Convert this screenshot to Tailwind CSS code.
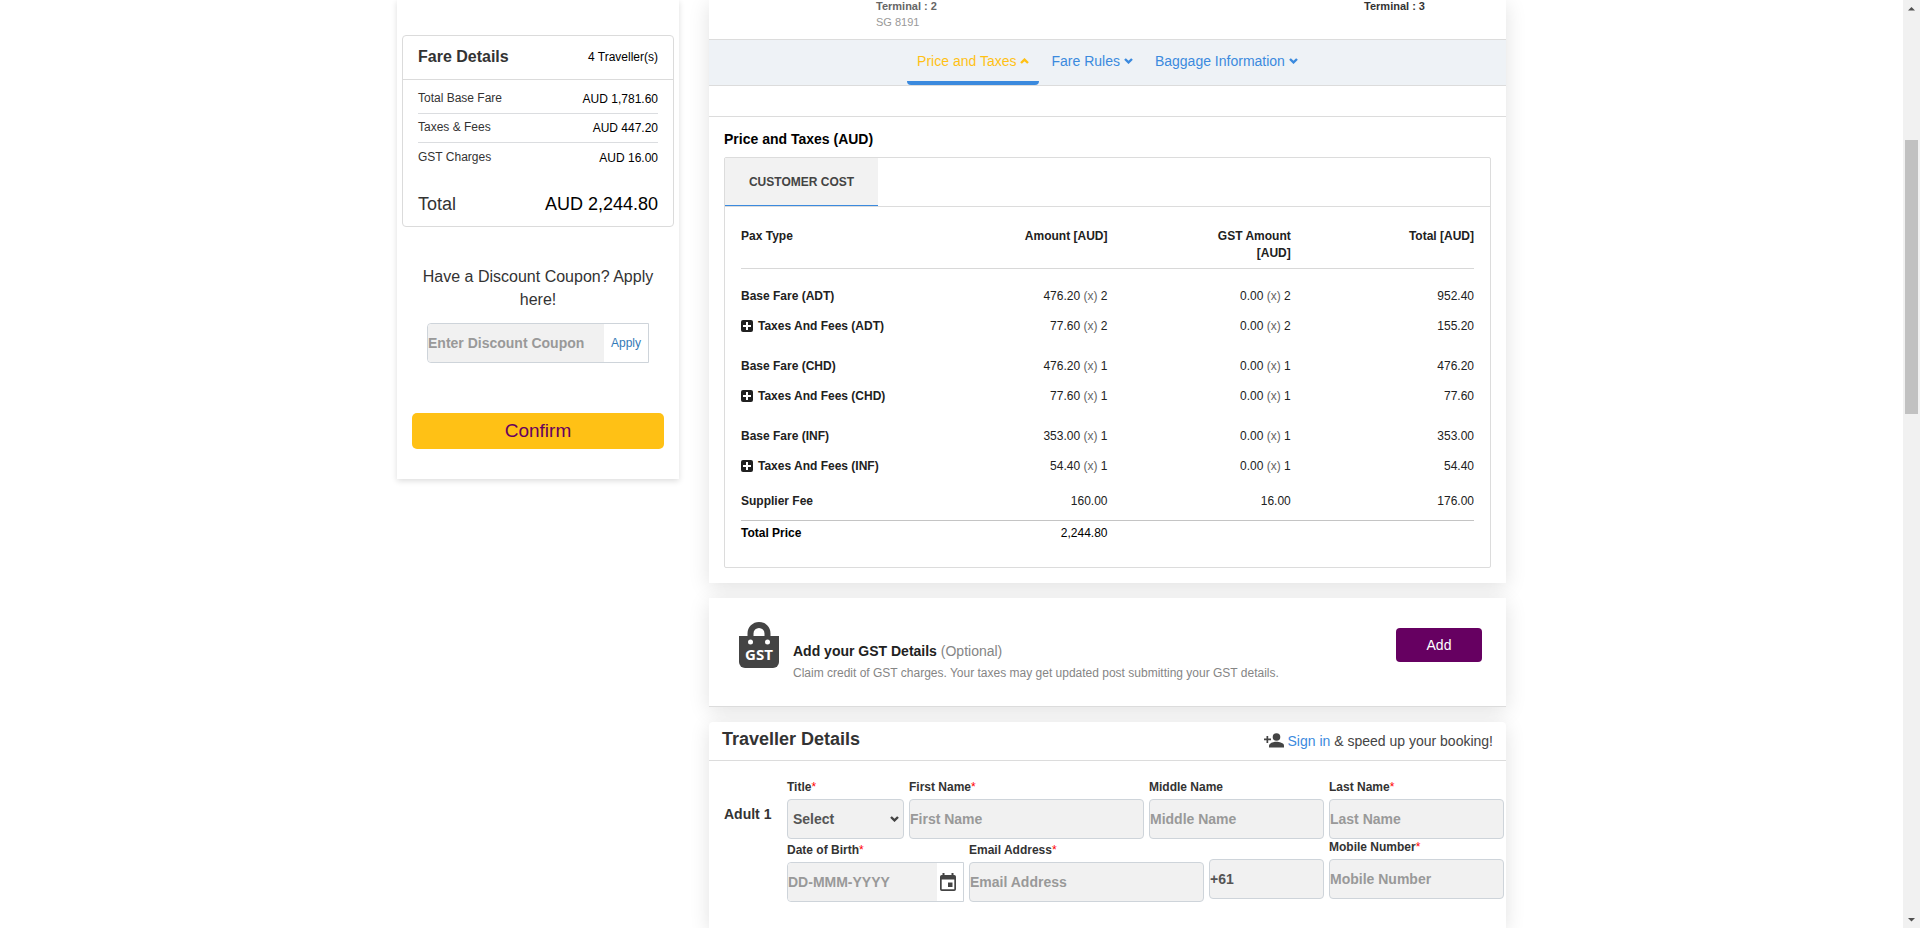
<!DOCTYPE html>
<html lang="en">
<head>
<meta charset="utf-8">
<meta name="viewport" content="width=device-width, initial-scale=1">
<title>Review and Traveller Details</title>
<script src="https://cdn.jsdelivr.net/npm/@tailwindcss/browser@4"></script>
</head>
<body class="flex h-screen overflow-hidden bg-white font-['Liberation_Sans',Arial,sans-serif] text-xs text-[#212121]">

<svg class="hidden" aria-hidden="true">
  <symbol id="plus" viewBox="0 0 12 12"><rect width="12" height="12" rx="2" fill="#212121"/><path d="M6 2v8M2 6h8" stroke="#fff" stroke-width="2"/></symbol>
  <symbol id="down" viewBox="0 0 9 6"><path d="M1 1l3.500 3.400L8 1" fill="none" stroke="currentColor" stroke-width="2.400"/></symbol>
  <symbol id="up" viewBox="0 0 9 6"><path d="M1 5l3.500 -3.400L8 5" fill="none" stroke="currentColor" stroke-width="2.400"/></symbol>
</svg>

<div class="h-full min-w-0 flex-1 overflow-hidden">
  <div class="mx-auto flex h-full w-full max-w-[1141px] gap-[30px] px-4">

    <aside class="w-[282px] shrink-0 self-start px-[5px] pt-[35px] pb-[30px] shadow-[0_2px_6px_rgba(0,0,0,0.14)]">
      <section class="rounded border border-[#dbdbdb]">
        <div class="flex h-11 items-center justify-between border-b border-[#dbdbdb] px-[15px] pb-0.5">
          <h2 class="text-base font-bold text-[#333]">Fare Details</h2>
          <span class="text-black">4 Traveller(s)</span>
        </div>
        <dl class="px-[15px] pt-[5px] text-black">
          <div class="flex h-[29px] items-center justify-between border-b border-[#dbdde0]"><dt class="pb-0.5 text-[#333]">Total Base Fare</dt><dd>AUD 1,781.60</dd></div>
          <div class="flex h-[29px] items-center justify-between border-b border-[#dbdde0]"><dt class="pb-0.5 text-[#333]">Taxes &amp; Fees</dt><dd>AUD 447.20</dd></div>
          <div class="flex h-[29px] items-center justify-between"><dt class="pb-0.5 text-[#333]">GST Charges</dt><dd>AUD 16.00</dd></div>
          <div class="flex h-[54px] items-end justify-between pb-2 text-lg"><dt class="text-[#333]">Total</dt><dd>AUD 2,244.80</dd></div>
        </dl>
      </section>

      <form class="px-[10px] pt-[38px]">
        <label for="coupon" class="block text-center text-base leading-[23px] text-[#333]">Have a Discount Coupon? Apply here!</label>
        <div class="mx-[15px] mt-3 flex h-10 rounded-l border border-[#ced4da]">
          <input id="coupon" type="text" placeholder="Enter Discount Coupon" class="min-w-0 flex-1 rounded-l bg-[#f1f1f1] text-sm font-bold placeholder:text-[#999]">
          <button type="button" class="w-11 text-[#337ab7]">Apply</button>
        </div>
        <button type="button" class="mt-[50px] h-9 w-full rounded-[5px] bg-[#ffc115] text-[19px] leading-6 text-[#66005f]">Confirm</button>
      </form>
    </aside>

    <main class="flex min-w-0 flex-1 flex-col gap-[15px]">
      <section class="bg-white pb-[15px] shadow-[0_4px_20px_rgba(0,0,0,0.12)]">
        <div class="flex h-[39px] justify-between pr-[81px] pl-[167px] text-[11px] leading-3">
          <div>
            <p class="font-bold text-[#666]">Terminal : 2</p>
            <p class="mt-1 text-[#999]">SG 8191</p>
          </div>
          <p class="font-bold text-[#333]">Terminal : 3</p>
        </div>
        <nav class="flex h-[47px] justify-center gap-0.5 border-y border-[#dcdcdc] bg-[#eef2f6] text-sm text-[#3b8ade]">
          <a href="#price" class="relative flex items-center gap-1 px-2.5 pb-1 text-[#ffc115]">Price and Taxes <svg class="h-1.5 w-[9px]"><use href="#up"/></svg><span class="absolute inset-x-0 bottom-0 h-1 rounded-b bg-[#3b8ade]"></span></a>
          <a href="#rules" class="flex items-center gap-1 px-2.5 pb-1">Fare Rules <svg class="h-1.5 w-[9px]"><use href="#down"/></svg></a>
          <a href="#baggage" class="flex items-center gap-1 px-2.5 pb-1">Baggage Information <svg class="h-1.5 w-[9px]"><use href="#down"/></svg></a>
        </nav>
        <div id="price" class="mt-[30px] border-t border-[#dcdcdc] px-[15px]">
          <h3 class="pt-3 pb-2 text-sm font-bold text-black">Price and Taxes (AUD)</h3>
          <div class="rounded-xs border border-[#dcdcdc]">
            <div class="flex border-b border-[#dcdcdc]">
              <button type="button" class="h-12 w-[153px] border-b border-[#3b8ade] bg-[#f2f2f2] font-bold text-[#444]">CUSTOMER COST</button>
            </div>
            <div class="px-4 pt-[21px] pb-5">
              <table class="w-full table-fixed text-right leading-[17px]">
                <thead class="align-top font-bold">
                  <tr class="border-b border-[#d8d8d8] *:pb-1.5">
                    <th scope="col" class="text-left">Pax Type</th>
                    <th scope="col">Amount [AUD]</th>
                    <th scope="col">GST Amount<br>[AUD]</th>
                    <th scope="col">Total [AUD]</th>
                  </tr>
                </thead>
                <tbody>
                  <tr class="h-[43px] *:pt-[13px]"><th scope="row" class="text-left">Base Fare (ADT)</th><td>476.20 <span class="text-[#666]">(x)</span> 2</td><td>0.00 <span class="text-[#666]">(x)</span> 2</td><td>952.40</td></tr>
                  <tr class="h-[30px]"><th scope="row"><button type="button" class="flex items-center gap-[5px]"><svg class="mb-0.5 size-3"><use href="#plus"/></svg>Taxes And Fees (ADT)</button></th><td>77.60 <span class="text-[#666]">(x)</span> 2</td><td>0.00 <span class="text-[#666]">(x)</span> 2</td><td>155.20</td></tr>
                  <tr class="h-10 *:pt-2.5"><th scope="row" class="text-left">Base Fare (CHD)</th><td>476.20 <span class="text-[#666]">(x)</span> 1</td><td>0.00 <span class="text-[#666]">(x)</span> 1</td><td>476.20</td></tr>
                  <tr class="h-[30px]"><th scope="row"><button type="button" class="flex items-center gap-[5px]"><svg class="mb-0.5 size-3"><use href="#plus"/></svg>Taxes And Fees (CHD)</button></th><td>77.60 <span class="text-[#666]">(x)</span> 1</td><td>0.00 <span class="text-[#666]">(x)</span> 1</td><td>77.60</td></tr>
                  <tr class="h-10 *:pt-2.5"><th scope="row" class="text-left">Base Fare (INF)</th><td>353.00 <span class="text-[#666]">(x)</span> 1</td><td>0.00 <span class="text-[#666]">(x)</span> 1</td><td>353.00</td></tr>
                  <tr class="h-[30px]"><th scope="row"><button type="button" class="flex items-center gap-[5px]"><svg class="mb-0.5 size-3"><use href="#plus"/></svg>Taxes And Fees (INF)</button></th><td>54.40 <span class="text-[#666]">(x)</span> 1</td><td>0.00 <span class="text-[#666]">(x)</span> 1</td><td>54.40</td></tr>
                  <tr class="h-[39px] border-b border-[#c4c4c4] *:pt-0.5"><th scope="row" class="text-left">Supplier Fee</th><td>160.00</td><td>16.00</td><td>176.00</td></tr>
                </tbody>
                <tfoot class="text-black">
                  <tr class="h-[26px]"><th scope="row" class="text-left">Total Price</th><td>2,244.80</td><td></td><td></td></tr>
                </tfoot>
              </table>
            </div>
          </div>
        </div>
      </section>

      <section class="flex h-[109px] shrink-0 items-start border-b border-[#dcdcdc] bg-white pr-6 pl-[30px] shadow-[0_4px_20px_rgba(0,0,0,0.12)]">
        <svg class="mt-6 h-[46px] w-10 shrink-0" viewBox="0 0 40 46" role="img" aria-label="GST">
          <path d="M11.500 18V11.500a8.500 8.500 0 0 1 17 0V18" fill="none" stroke="#444" stroke-width="6"/>
          <path d="M0 14H40V40a6 6 0 0 1-6 6H6a6 6 0 0 1-6-6Z" fill="#444"/>
          <circle cx="11.500" cy="20" r="2.500" fill="#fff"/><circle cx="28.500" cy="20" r="2.500" fill="#fff"/>
          <text x="20" y="38" text-anchor="middle" class="fill-white font-['Open_Sans','Noto_Sans',sans-serif] text-[15px] font-bold">GST</text>
        </svg>
        <div class="flex-1 pt-[43px] pl-3.5 text-[#858585]">
          <h3 class="text-sm leading-5"><strong class="text-[#212121]">Add your GST Details</strong> (Optional)</h3>
          <p class="mt-0.5 leading-5">Claim credit of GST charges. Your taxes may get updated post submitting your GST details.</p>
        </div>
        <button type="button" class="mt-[30px] h-[34px] w-[86px] rounded bg-[#660061] text-sm text-white">Add</button>
      </section>

      <section class="flex-1 rounded-t bg-white shadow-[0_4px_20px_rgba(0,0,0,0.12)]">
        <div class="flex h-[39px] items-center justify-between border-b border-[#dcdcdc] px-[13px]">
          <h2 class="pb-1 text-lg font-bold text-[#333]">Traveller Details</h2>
          <p class="flex items-center gap-1 text-sm text-[#444]">
            <svg class="h-[15px] w-5" viewBox="0 0 20 15" fill="#444" aria-hidden="true"><circle cx="12.500" cy="4" r="3.800"/><path d="M5 14.500v-2c0-2.500 5-3.700 7.500-3.700s7.500 1.200 7.500 3.700v2Z"/><path d="M2.500 3h1.700v2.600H7v1.600H4.200V10H2.500V7.200H0V5.600h2.500Z"/></svg>
            <span><a href="#signin" class="text-[#3b8ade]">Sign in</a> &amp; speed up your booking!</span>
          </p>
        </div>
        <form class="flex pt-[18px] pr-0.5 pl-[15px] text-[#333]">
          <h3 class="w-[63px] shrink-0 pt-[25px] text-sm font-bold">Adult 1</h3>
          <div class="min-w-0 flex-1">
            <div class="grid grid-cols-[117fr_235fr_175fr_175fr] gap-[5px] *:min-w-0">
              <div>
                <label for="title" class="block pb-1 font-bold">Title<span class="font-normal text-[#f00]">*</span></label>
                <div class="relative">
                  <select id="title" class="h-10 w-full appearance-none rounded border border-[#ced4da] bg-[#f1f1f1] px-[5px] text-sm font-bold text-[#555]"><option>Select</option><option>Mr</option><option>Mrs</option><option>Ms</option></select>
                  <svg class="pointer-events-none absolute top-[17px] right-[5px] h-1.5 w-[9px] text-[#444]"><use href="#down"/></svg>
                </div>
              </div>
              <div>
                <label for="first" class="block pb-1 font-bold">First Name<span class="font-normal text-[#f00]">*</span></label>
                <input id="first" type="text" placeholder="First Name" class="h-10 w-full rounded border border-[#ced4da] bg-[#f1f1f1] text-sm font-bold placeholder:text-[#999]">
              </div>
              <div>
                <label for="middle" class="block pb-1 font-bold">Middle Name</label>
                <input id="middle" type="text" placeholder="Middle Name" class="h-10 w-full rounded border border-[#ced4da] bg-[#f1f1f1] text-sm font-bold placeholder:text-[#999]">
              </div>
              <div>
                <label for="last" class="block pb-1 font-bold">Last Name<span class="font-normal text-[#f00]">*</span></label>
                <input id="last" type="text" placeholder="Last Name" class="h-10 w-full rounded border border-[#ced4da] bg-[#f1f1f1] text-sm font-bold placeholder:text-[#999]">
              </div>
            </div>
            <div class="grid grid-cols-[177fr_235fr_115fr_175fr] gap-[5px] *:min-w-0">
              <div class="pt-[3px]">
                <label for="dob" class="block pb-1 font-bold">Date of Birth<span class="font-normal text-[#f00]">*</span></label>
                <div class="flex h-10 rounded-l border border-[#ced4da]">
                  <input id="dob" type="text" placeholder="DD-MMM-YYYY" class="min-w-0 flex-1 rounded-l bg-[#f1f1f1] text-sm font-bold placeholder:text-[#999]">
                  <button type="button" aria-label="Open calendar" class="flex w-[26px] items-center pl-[3px]">
                    <svg class="h-[18px] w-4" viewBox="0 0 16 18" fill="#444"><path fill-rule="evenodd" d="M2.500 0h2v2h7V0h2v2h.700A1.800 1.800 0 0 1 16 3.800v12.400a1.800 1.800 0 0 1-1.800 1.800H1.800A1.800 1.800 0 0 1 0 16.200V3.800A1.800 1.800 0 0 1 1.800 2h.700ZM1.700 6.500v9.800h12.600V6.500Z"/><path d="M8 9.500h4.500V14H8Z"/></svg>
                  </button>
                </div>
              </div>
              <div class="pt-[3px]">
                <label for="email" class="block pb-1 font-bold">Email Address<span class="font-normal text-[#f00]">*</span></label>
                <input id="email" type="email" placeholder="Email Address" class="h-10 w-full rounded border border-[#ced4da] bg-[#f1f1f1] text-sm font-bold placeholder:text-[#999]">
              </div>
              <div class="pt-5">
                <input id="code" type="tel" value="+61" aria-label="Country code" class="h-10 w-full rounded border border-[#ced4da] bg-[#f1f1f1] text-sm font-bold text-[#555]">
              </div>
              <div>
                <label for="mobile" class="block pb-1 font-bold">Mobile Number<span class="font-normal text-[#f00]">*</span></label>
                <input id="mobile" type="tel" placeholder="Mobile Number" class="h-10 w-full rounded border border-[#ced4da] bg-[#f1f1f1] text-sm font-bold placeholder:text-[#999]">
              </div>
            </div>
          </div>
        </form>
      </section>
    </main>
  </div>
</div>

<!-- Page scroll bar -->
<div class="flex h-full w-[17px] shrink-0 flex-col items-center justify-between bg-[#f1f1f1]" aria-hidden="true">
  <svg class="h-[17px] w-[17px] shrink-0" viewBox="0 0 17 17" fill="#505050"><path d="M5 10.500h7L8.500 7Z"/></svg>
  <div class="w-full flex-1 px-0.5 pt-[123px]"><div class="h-[274px] bg-[#c1c1c1]"></div></div>
  <svg class="h-[17px] w-[17px] shrink-0" viewBox="0 0 17 17" fill="#505050"><path d="M5 7h7l-3.500 3.500Z"/></svg>
</div>
</body>
</html>
